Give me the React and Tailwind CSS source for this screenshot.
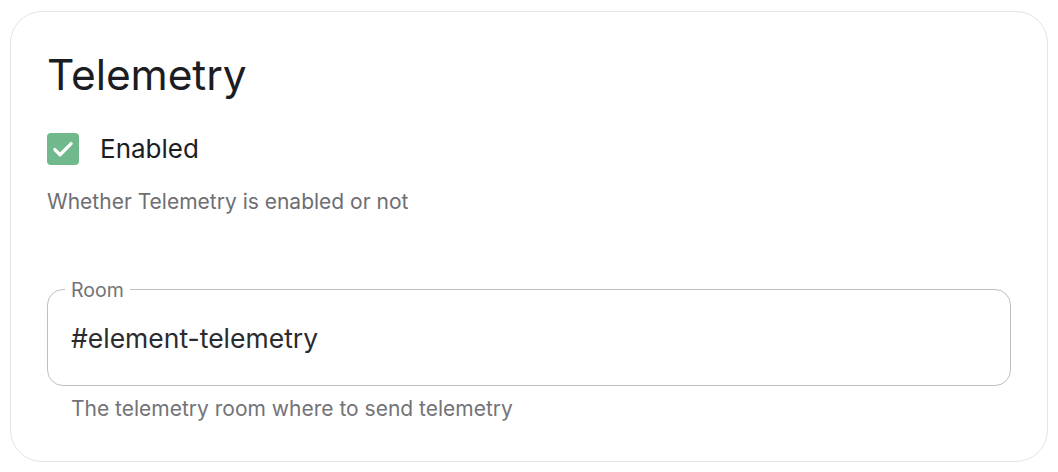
import React, { useState } from 'react'

const App = () => {
  const [enabled, setEnabled] = useState(true)
  const [room, setRoom] = useState('#element-telemetry')

  return (
    <div className="w-[1058px] h-[472px] bg-white p-[10px] pt-[11px] font-['Inter',sans-serif]">
      <div className="h-[451px] border border-[#e3e3e8] rounded-[32px] px-[36px] pt-[42px]">
        <h1 className="text-[42.5px] leading-[1] text-[#1b1d22] tracking-[-0.1px]">Telemetry</h1>

        <label className="mt-[36px] flex items-center gap-[21px] cursor-pointer">
          <button
            onClick={() => setEnabled(!enabled)}
            className={`w-[32px] h-[32px] rounded-[4px] flex items-center justify-center ${enabled ? 'bg-[#70b98c]' : 'bg-white border-2 border-[#c0c0c0]'}`}
          >
            {enabled && (
              <svg width="26" height="26" viewBox="0 0 24 24" fill="none" stroke="white" strokeWidth="3" strokeLinecap="round" strokeLinejoin="round">
                <path d="M4.5 12.5l4.8 4.8L19.5 7" />
              </svg>
            )}
          </button>
          <span className="text-[26px] leading-[32px] text-[#1b1d22]">Enabled</span>
        </label>

        <p className="mt-[23px] text-[21px] leading-[28px] text-[#6e6e73]">Whether Telemetry is enabled or not</p>

        <fieldset className="mt-[64px] border border-[#c0c0c4] rounded-[16px] px-[23px] pb-[31px] pt-[22px]">
          <legend className="px-[6px] ml-[-6px] text-[19.5px] text-[#737378] leading-[20px]">Room</legend>
          <input
            value={room}
            onChange={(e) => setRoom(e.target.value)}
            className="w-full outline-none text-[26.5px] leading-[32px] text-[#2b2b2f] bg-transparent"
          />
        </fieldset>
        <p className="mt-[9px] ml-[24px] text-[21px] leading-[28px] text-[#737378]">The telemetry room where to send telemetry</p>
      </div>
    </div>
  )
}

export default App
